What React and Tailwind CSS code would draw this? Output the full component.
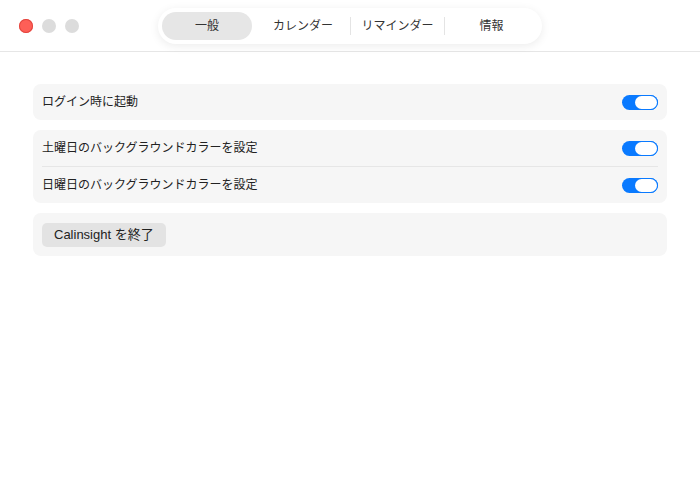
import React from 'react';

const FONT = { fontFamily: '"Liberation Sans", "Noto Sans CJK JP", sans-serif' };

function Toggle() {
  return (
    <span className="relative inline-flex h-[15px] w-[36px] items-center rounded-full bg-[#0a7aff]">
      <span className="absolute right-[1px] top-[1px] h-[13px] w-[22px] rounded-full bg-white ring-1 ring-[#0a7aff]" />
    </span>
  );
}

function Row({ label }) {
  return (
    <div className="flex h-[36px] items-center justify-between px-[9px]">
      <span className="text-[12px] text-[#222]">{label}</span>
      <Toggle />
    </div>
  );
}

const tabs = ['一般', 'カレンダー', 'リマインダー', '情報'];

export default function App() {
  return (
    <div className="h-[502px] w-[700px] bg-white" style={FONT}>
      {/* title bar */}
      <div className="relative flex h-[52px] items-center border-b border-[#e6e6e6] bg-white">
        <div className="flex items-center gap-[9px] pl-[19px]">
          <span className="h-[14px] w-[14px] rounded-full bg-[#fe5f57] ring-1 ring-inset ring-[#e2463f]" />
          <span className="h-[14px] w-[14px] rounded-full bg-[#dcdcdc]" />
          <span className="h-[14px] w-[14px] rounded-full bg-[#dcdcdc]" />
        </div>
        <div className="absolute left-[158px] top-[8px] flex h-[36px] w-[384px] items-center rounded-full bg-white px-[4px] shadow-[0_2px_10px_rgba(0,0,0,0.08)]">
          {tabs.map((t, i) => (
            <div key={t} className="flex h-[28px] flex-1 items-center">
              {i >= 2 && <span className="h-[18px] w-px bg-[#e4e4e4]" />}
              <span
                className={[
                  'flex h-[28px] flex-1 items-center justify-center rounded-full text-[12px] text-[#333]',
                  i === 0 ? 'mr-[4px] bg-[#e6e6e6]' : ''
                ].join(' ')}
              >
                {t}
              </span>
            </div>
          ))}
        </div>
      </div>

      {/* content */}
      <div className="flex flex-col gap-[10px] px-[33px] pt-[32px]">
        <div className="rounded-[8px] bg-[#f6f6f6]">
          <Row label="ログイン時に起動" />
        </div>
        <div className="rounded-[8px] bg-[#f6f6f6]">
          <Row label="土曜日のバックグラウンドカラーを設定" />
          <div className="mx-[9px] h-px bg-[#e6e6e6]" />
          <Row label="日曜日のバックグラウンドカラーを設定" />
        </div>
        <div className="flex h-[43px] items-center rounded-[8px] bg-[#f6f6f6] px-[9px]">
          <button
            type="button"
            className="flex h-[24px] items-center rounded-[5px] bg-[#e3e3e3] px-[12px] text-[13px] text-[#222]"
          >
            Calinsight を終了
          </button>
        </div>
      </div>
    </div>
  );
}
